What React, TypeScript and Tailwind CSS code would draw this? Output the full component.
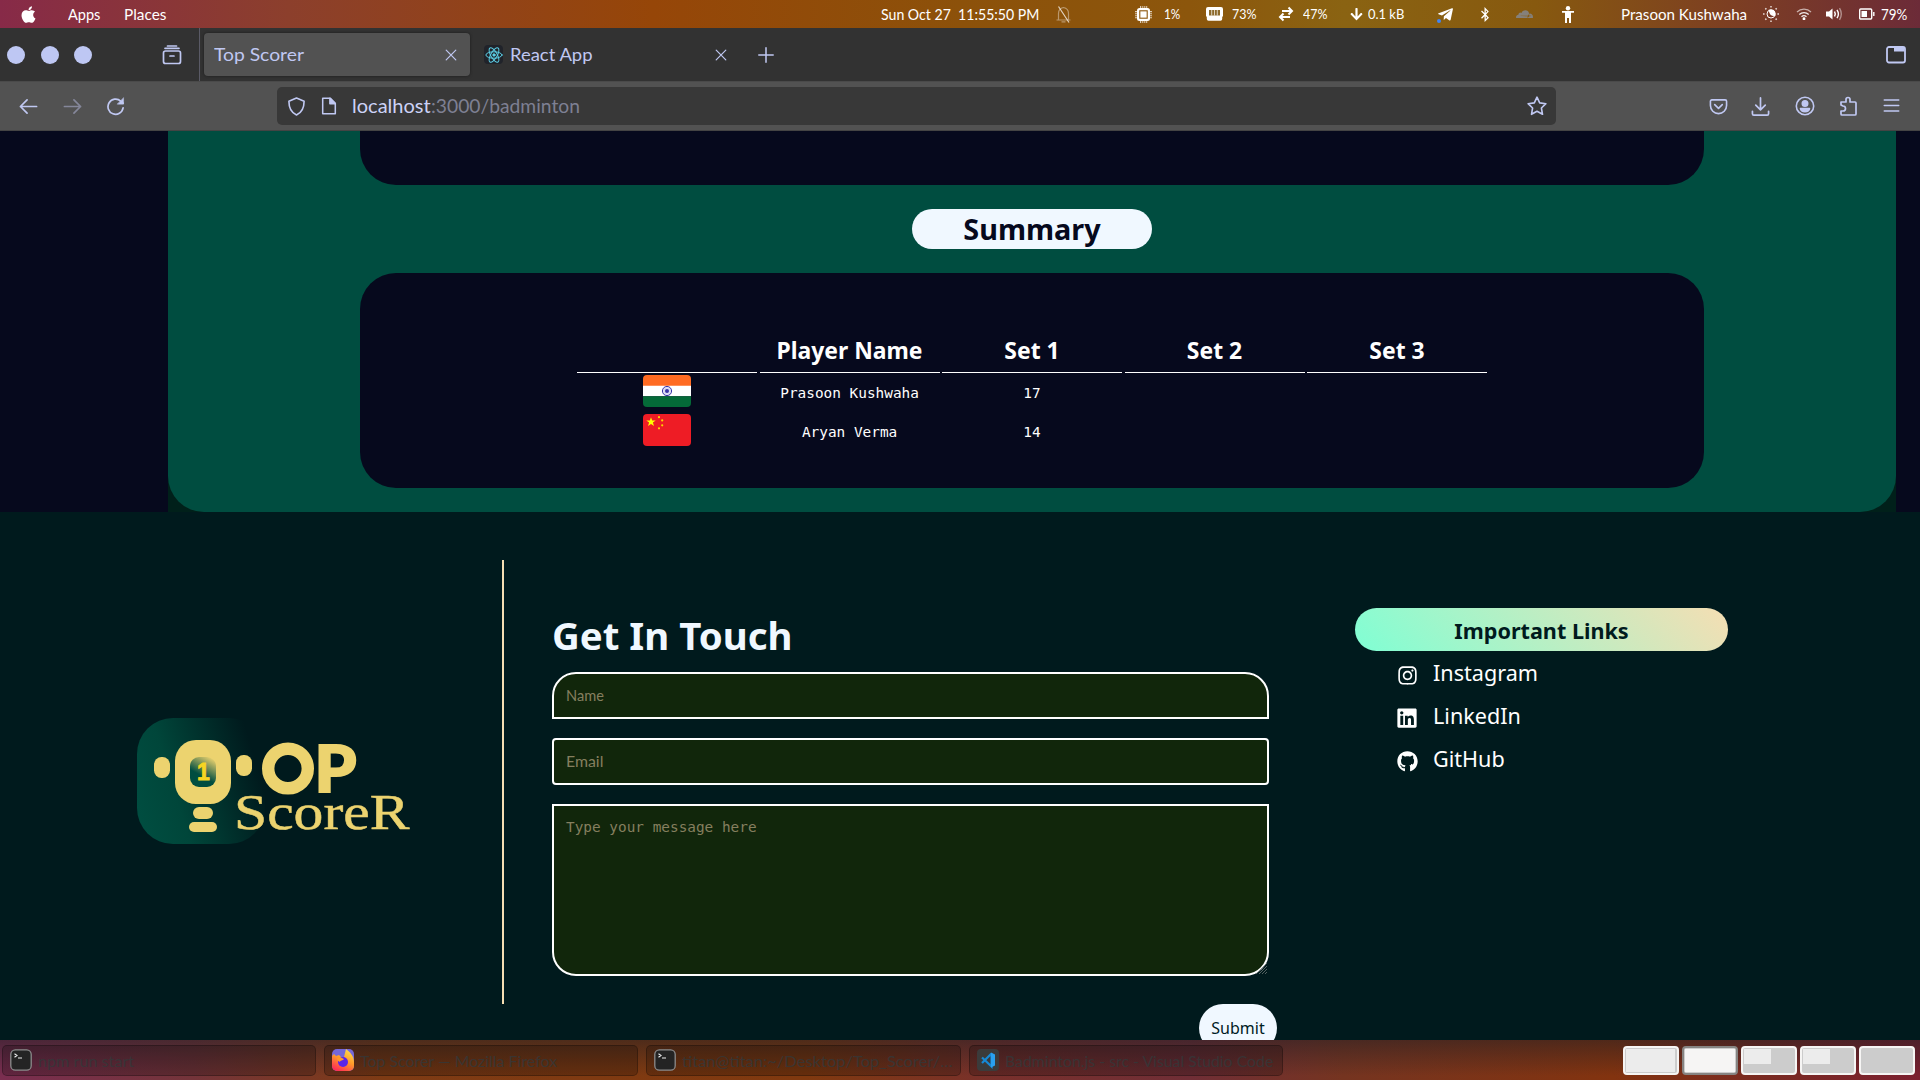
import { useLayoutEffect, useRef, useState } from "react";
import type { ReactNode } from "react";
import {
  FaApple,
  FaArrowDown,
  FaBluetoothB,
  FaCloudflare,
  FaGithub,
  FaInstagram,
  FaLinkedin,
  FaTelegramPlane,
} from "react-icons/fa";

/* Text squeezed or stretched horizontally to an exact width. */
function Hand({ w, className = "", children }: { w: number; className?: string; children: ReactNode }) {
  const ref = useRef<HTMLSpanElement>(null);
  const [scale, setScale] = useState(1);
  useLayoutEffect(() => {
    if (ref.current) setScale(w / ref.current.offsetWidth);
  }, [w]);
  return (
    <span className={`flex shrink-0 ${className}`} style={{ width: w }}>
      <span
        ref={ref}
        className="inline-block shrink-0 origin-left whitespace-nowrap font-['Lato',sans-serif]"
        style={{ transform: `scaleX(${scale})` }}
      >
        {children}
      </span>
    </span>
  );
}

function Line({ children, className = "", size = 20, sw = 1.6 }: { children: ReactNode; className?: string; size?: number; sw?: number }) {
  return (
    <svg
      width={size}
      height={size}
      viewBox="0 0 20 20"
      fill="none"
      stroke="currentColor"
      strokeWidth={sw}
      strokeLinecap="round"
      strokeLinejoin="round"
      className={`shrink-0 ${className}`}
    >
      {children}
    </svg>
  );
}

const Cross = ({ className = "" }: { className?: string }) => (
  <Line className={className} size={12} sw={2}>
    <path d="M2 2l16 16M18 2L2 18" />
  </Line>
);

function TopBar() {
  return (
    <header className="flex h-7 shrink-0 items-center bg-[linear-gradient(90deg,#872a48_0%,#8c3f2c_15%,#964608_34%,#8c510a_50%,#8c560c_62%,#8a6312_70%,#87590f_80%,#7d3f22_90%,#6c2b38_100%)] text-[15px] leading-none text-white">
      <FaApple className="ml-[19px] size-[19px] shrink-0" />
      <Hand w={32} className="ml-[30px]">Apps</Hand>
      <Hand w={42} className="ml-6">Places</Hand>
      <Hand w={158} className="ml-[715px]">Sun Oct 27&nbsp; 11:55:50 PM</Hand>
      <svg className="ml-[17px] h-[17px] w-[15px] shrink-0" viewBox="0 0 15 17" fill="none" stroke="currentColor" strokeWidth="1.200">
        <path d="M.5 14h14M2.500 14V7.500q0-5 5-6 5 1 5 6V14M5.500 15.800h4" opacity=".4" />
        <path d="M2.500.5l10.500 16" opacity=".75" />
      </svg>
      <svg className="ml-[64px] size-[17px] shrink-0" viewBox="0 0 17 17" fill="currentColor">
        <path d="M5 0h1.200v17H5zM7.300 0h1v17h-1zM9.300 0h1v17h-1zM11.200 0h1v17h-1zM0 5h17v1.200H0zM0 7.300h17v1H0zM0 9.300h17v1H0zM0 11.200h17v1H0z" opacity=".7" />
        <rect x="2" y="2" width="13" height="13" rx="2.5" />
        <rect x="4.800" y="4.800" width="7.400" height="7.400" fill="none" stroke="#8c560c" strokeWidth="1.100" />
      </svg>
      <Hand w={16} className="ml-3 text-sm leading-none">1%</Hand>
      <svg className="ml-[26px] h-[14px] w-[17px] shrink-0" viewBox="0 0 17 14" fill="currentColor">
        <path d="M2 0h13a2 2 0 0 1 2 2v7.500h-.8V12a1.700 1.700 0 0 1-1.700 1.700h-12A1.700 1.700 0 0 1 .8 12V9.500H0V2a2 2 0 0 1 2-2z" />
        <path d="M3 3h11v5.500H3z" fill="#8c6a2c" />
        <path d="M5.200 3h1v5.500h-1zM8 3h1v5.500H8zM10.800 3h1v5.500h-1z" opacity=".7" />
      </svg>
      <Hand w={24} className="ml-[9px] text-sm leading-none">73%</Hand>
      <svg className="ml-[22px] size-4 shrink-0" viewBox="0 0 16 16" fill="none" stroke="currentColor" strokeWidth="2">
        <path d="M4 5h10M10.500 1.500L14 5l-3.500 3.500M12 11H2M5.500 7.500L2 11l3.500 3.500" />
      </svg>
      <Hand w={24} className="ml-[9px] text-sm leading-none">47%</Hand>
      <FaArrowDown className="ml-[23px] h-[14px] w-[13px] shrink-0" />
      <Hand w={36} className="ml-[5px] text-sm leading-none">0.1 kB</Hand>
      <span className="relative ml-[33px] size-[17px] shrink-0">
        <FaTelegramPlane className="size-[17px]" />
        <span className="absolute bottom-0 left-0 size-1 rounded-full bg-[#4285f4]" />
      </span>
      <FaBluetoothB className="ml-[25px] h-[15px] w-3 shrink-0" />
      <FaCloudflare className="ml-[25px] size-[17px] shrink-0 text-[#85807a]" />
      <svg className="ml-[29px] h-[17px] w-3 shrink-0" viewBox="0 0 12 17" fill="currentColor">
        <circle cx="6" cy="2.200" r="2.200" />
        <path d="M0 5h12v1.800H9V17H7v-5H5v5H3V6.800H0z" />
      </svg>
      <Hand w={126} className="ml-[47px]">Prasoon Kushwaha</Hand>
      <svg className="ml-4 size-4 shrink-0" viewBox="0 0 16 16" stroke="currentColor" strokeWidth="1.500">
        <circle cx="8" cy="8" r="4" fill="none" strokeWidth="1" />
        <path d="M8 4a4 4 0 0 1 3.800 5.200C9 9.500 7 7.500 6.500 4.300z" fill="currentColor" />
        <path d="M8 0v1.600M8 14.400V16M0 8h1.600M14.400 8H16M2.300 2.300l1.100 1.100M12.600 12.600l1.100 1.100M2.300 13.700l1.100-1.100M12.600 3.400l1.100-1.100" opacity=".8" />
      </svg>
      <svg className="ml-[17px] h-3 w-4 shrink-0" viewBox="0 0 16 12" fill="none" stroke="currentColor" strokeWidth="1.300">
        <path d="M1 4a10 10 0 0 1 14 0" opacity=".6" />
        <path d="M3.300 6.500a6.700 6.700 0 0 1 9.400 0M5.500 8.800a3.600 3.600 0 0 1 5 0" opacity=".9" />
        <circle cx="8" cy="10.800" r=".8" fill="currentColor" />
      </svg>
      <svg className="ml-[14px] h-[14px] w-[17px] shrink-0" viewBox="0 0 17 14" fill="none" stroke="currentColor" strokeWidth="1.400">
        <path d="M0 4.500h3L6.500 1.500v11L3 9.500H0z" fill="currentColor" stroke="none" />
        <path d="M8.500 4.500q1.600 2.500 0 5M11 2.800q2.800 4.200 0 8.400" />
        <path d="M13.500 1.200q3.600 5.800 0 11.600" opacity=".45" />
      </svg>
      <svg className="ml-[16px] h-3 w-4 shrink-0" viewBox="0 0 16 12" fill="none" stroke="currentColor" strokeWidth="1.400">
        <rect x=".7" y="1" width="12" height="10" rx="1" />
        <path d="M2.500 3h5.500v6H2.500z" fill="currentColor" stroke="none" />
        <path d="M14.800 4v4" />
      </svg>
      <Hand w={26} className="ml-1.5">79%</Hand>
    </header>
  );
}

function TabBar() {
  return (
    <div className="flex h-[53px] shrink-0 items-center bg-[#323232] text-[#c0c8f2]">
      <span className="ml-[7px] size-[18px] rounded-full bg-[#bec7f3]" />
      <span className="ml-4 size-[18px] rounded-full bg-[#bec7f3]" />
      <span className="ml-[15px] size-[18px] rounded-full bg-[#bec7f3]" />
      <Line className="ml-[70px]" sw={1.7}>
        <rect x="1.500" y="6" width="17" height="12.500" rx="2" />
        <path d="M3 3.300h14M5.500 1h9M8 11h4" />
      </Line>
      <span className="ml-[17px] h-full w-px bg-[#5a5a66]" />
      <div className="ml-1 flex h-[43px] w-[266px] items-center rounded bg-[#525252] shadow-[0_0_3px_#1c1c1c]">
        <Hand w={90} className="ml-2.5 text-[18px]">Top Scorer</Hand>
        <Cross className="ml-[141px]" />
      </div>
      <span className="ml-3.5 flex size-[19px] items-center justify-center rounded-sm bg-[#20232a] text-[#5ccfe6]">
        <Line size={18} sw={1.1}>
          <ellipse cx="10" cy="10" rx="9" ry="3.600" />
          <ellipse cx="10" cy="10" rx="9" ry="3.600" transform="rotate(60 10 10)" />
          <ellipse cx="10" cy="10" rx="9" ry="3.600" transform="rotate(120 10 10)" />
          <circle cx="10" cy="10" r="1.300" fill="currentColor" />
        </Line>
      </span>
      <Hand w={83} className="ml-[7px] text-[18px]">React App</Hand>
      <Cross className="ml-[122px]" />
      <Line className="ml-[31px]" size={16} sw={1.9}>
        <path d="M10 1v18M1 10h18" />
      </Line>
      <Line className="mr-3.5 ml-auto" sw={1.8}>
        <rect x="1" y="2" width="18" height="15.500" rx="2" />
        <path d="M8 2h10.500v4.500H8z" fill="currentColor" stroke="none" />
      </Line>
    </div>
  );
}

function Toolbar() {
  return (
    <div className="flex h-[50px] shrink-0 items-center border-y border-t-[#4a4a4a] border-b-[#444] bg-[#525252] text-[#c0c8f2]">
      <Line className="ml-[19px]" size={19} sw={1.8}>
        <path d="M18.500 10H1.500M8.500 3l-7 7 7 7" />
      </Line>
      <Line className="ml-[25px] text-[#85879a]" size={19} sw={1.8}>
        <path d="M1.500 10h17M11.500 3l7 7-7 7" />
      </Line>
      <Line className="ml-6" size={19} sw={1.8}>
        <path d="M18 11.500A8 8 0 1 1 15.500 4.300L18 6.500" />
        <path d="M18.500 1v6.500h-6.500z" fill="currentColor" strokeWidth=".5" />
      </Line>
      <div className="ml-[152px] flex h-[38px] w-[1279px] items-center rounded-[5px] bg-[#383838]">
        <Line className="ml-[10px]" size={19} sw={1.7}>
          <path d="M10 1l8 3.500c0 7-2.500 12-8 14.500C4.500 16.500 2 11.500 2 4.500z" />
        </Line>
        <Line className="ml-[14px]" size={18} sw={1.7}>
          <path d="M3 1.500h8.500L17 7v11.500H3z" />
          <path d="M11 1.500V7.500h6z" fill="currentColor" />
        </Line>
        <Hand w={79} className="ml-[14px] text-[19px] text-[#ccd2f7]">localhost</Hand>
        <Hand w={149} className="text-[19px] text-[#7e8093]">:3000/badminton</Hand>
        <Line className="mr-[9px] ml-auto" sw={1.6}>
          <path d="M10 1.200l2.700 5.700 6.200.800-4.500 4.300 1.100 6.300L10 15.200l-5.500 3.100 1.100-6.300L1.100 7.700l6.200-.8z" />
        </Line>
      </div>
      <Line className="ml-[153px]" size={19} sw={1.7}>
        <path d="M3 3h14a1.500 1.500 0 0 1 1.500 1.500V9a8.500 8.500 0 0 1-17 0V4.500A1.500 1.500 0 0 1 3 3zM6 8l4 4 4-4" />
      </Line>
      <Line className="ml-[23px]" size={19} sw={1.8}>
        <path d="M10 1v12M5 8.500l5 5 5-5M1.500 15v2.500a1.500 1.500 0 0 0 1.500 1.500h14a1.500 1.500 0 0 0 1.500-1.500V15" />
      </Line>
      <Line className="ml-[25px]" size={20} sw={1.6}>
        <circle cx="10" cy="10" r="8.700" />
        <circle cx="10" cy="7.500" r="2.700" fill="currentColor" />
        <path d="M5.500 12.500h9q-.5 3-4.500 3.200-4-.2-4.500-3.200z" fill="currentColor" />
      </Line>
      <Line className="ml-[23px]" size={20} sw={1.7}>
        <path d="M3 9V6h5V3.500a2 2 0 0 1 4 0V6h5a1 1 0 0 1 1 1v11a1 1 0 0 1-1 1H4a1 1 0 0 1-1-1v-3h2a2.500 2.500 0 0 0 0-5z" />
      </Line>
      <Line className="ml-[25px] mb-0.5" size={17} sw={1.8}>
        <path d="M1.500 3.500h17M1.500 10h17M1.500 16.500h17" />
      </Line>
    </div>
  );
}

function IndiaFlag() {
  return (
    <svg width="48" height="32" viewBox="0 0 48 32" className="rounded-[4px]">
      <path fill="#ff6b22" d="M0 0h48v11H0z" />
      <path fill="#fff" d="M0 10.700h48v10.600H0z" />
      <path fill="#046a38" d="M0 21.300h48V32H0z" />
      <circle cx="24" cy="16" r="4.600" fill="#dcdcf4" stroke="#3a36a8" strokeWidth="1" />
      <circle cx="24" cy="16" r="2" fill="#3a36a8" />
    </svg>
  );
}

function ChinaFlag() {
  return (
    <svg width="48" height="32" viewBox="0 0 48 32" className="rounded-[4px]">
      <path fill="#ee1c25" d="M0 0h48v32H0z" />
      <path fill="#ff0" d="M8 3.200l1.200 3.300h3.500l-2.800 2.100 1.100 3.500L8 10l-3 2.100 1.100-3.500-2.800-2.100h3.500z" />
      <g fill="#ffd800">
        <circle cx="16" cy="3.200" r="1.100" />
        <circle cx="19.200" cy="6.400" r="1.100" />
        <circle cx="19.200" cy="11.300" r="1.100" />
        <circle cx="16" cy="14.300" r="1.100" />
      </g>
    </svg>
  );
}

function Summary() {
  const rows = [
    { flag: <IndiaFlag />, name: "Prasoon Kushwaha", score: "17" },
    { flag: <ChinaFlag />, name: "Aryan Verma", score: "14" },
  ];
  return (
    <section className="h-[381px] shrink-0 bg-[#06091d] pr-6 pl-[168px]">
      <div className="h-full bg-[#00201a]">
        <div className="flex h-full flex-col items-center rounded-b-[36px] bg-[#004d40]">
          <div className="h-[54px] w-[1344px] rounded-b-[36px] bg-[#06091d]" />
          <h2 className="mt-6 flex h-10 w-60 items-center justify-center rounded-full bg-[#f0f8ff] text-[28.8px] leading-none font-bold text-[#06091d]">
            Summary
          </h2>
          <div className="mt-6 h-[215px] w-[1344px] rounded-[36px] bg-[#06091d] pt-14 pl-[217px] text-white">
            <div className="grid w-[910px] grid-cols-5 gap-x-[2.500px] text-center text-[22.9px] font-bold">
              {["", "Player Name", "Set 1", "Set 2", "Set 3"].map((h, i) => (
                <div key={i} className="h-11 border-b border-white leading-[43px]">
                  {h}
                </div>
              ))}
            </div>
            {rows.map((r) => (
              <div
                key={r.name}
                className="mt-0.5 grid h-[37px] w-[910px] grid-cols-5 gap-x-0.5 text-center font-['DejaVu_Sans_Mono',monospace] text-[14.4px] leading-[37px]"
              >
                <div className="flex justify-center">{r.flag}</div>
                <div>{r.name}</div>
                <div>{r.score}</div>
              </div>
            ))}
          </div>
        </div>
      </div>
    </section>
  );
}

function Logo() {
  return (
    <svg width="276" height="130" viewBox="0 0 276 130" className="shrink-0">
      <defs>
        <linearGradient id="tile" x1="0" y1=".7" x2="1" y2=".4">
          <stop offset="0" stopColor="#004d40" />
          <stop offset=".3" stopColor="#00463a" />
          <stop offset=".95" stopColor="#001a1d" />
        </linearGradient>
        <linearGradient id="core" x1=".3" y1="1" x2=".8" y2="0">
          <stop offset=".35" stopColor="#004d40" />
          <stop offset="1" stopColor="#ecd36f" />
        </linearGradient>
      </defs>
      <rect x="0" y="1" width="128" height="126" rx="36" fill="url(#tile)" />
      <g fill="#ecd36f">
        <rect x="38" y="23" width="56" height="64" rx="21" />
        <rect x="17" y="40" width="16" height="21" rx="7.500" />
        <rect x="99" y="38" width="16" height="21" rx="7.500" />
        <rect x="56" y="90" width="20" height="12" rx="6" />
        <rect x="52" y="105" width="28" height="10" rx="5" />
      </g>
      <rect x="53" y="40" width="26" height="30" rx="9" fill="url(#core)" />
      <text x="66.500" y="63" textAnchor="middle" fontFamily="Liberation Sans" fontWeight="700" fontSize="23" fill="#f6d522" stroke="#f6d522" strokeWidth=".8">1</text>
      <circle cx="151" cy="51.500" r="19.800" fill="none" stroke="#ecd36f" strokeWidth="12.400" />
      <text x="177.500" y="74.500" fontFamily="Lato" fontWeight="900" fontSize="64" fill="#ecd36f" stroke="#ecd36f" strokeWidth="2" textLength="42" lengthAdjust="spacingAndGlyphs">P</text>
      <text x="97" y="112" fontFamily="Liberation Serif" fontSize="51" fill="#ecd36f" stroke="#ecd36f" strokeWidth=".5" textLength="175.500" lengthAdjust="spacingAndGlyphs">ScoreR</text>
    </svg>
  );
}

function Footer() {
  const links = [
    { icon: <FaInstagram className="size-[21px]" />, label: "Instagram" },
    { icon: <FaLinkedin className="size-[22px]" />, label: "LinkedIn" },
    { icon: <FaGithub className="size-[21px]" />, label: "GitHub" },
  ];
  return (
    <footer className="flex min-h-0 flex-1 items-start overflow-hidden bg-[#001a1d] pt-12">
      <div className="flex h-[444px] w-[504px] shrink-0 items-center border-r-2 border-[#f5deb3] pl-[137px]">
        <Logo />
      </div>
      <form className="ml-12 w-[717px] shrink-0 pt-[47px]">
        <h2 className="h-[65px] text-[38.4px] leading-[56px] font-bold text-[#f0f8ff]">Get In Touch</h2>
        <div className="flex h-[47px] items-center rounded-t-3xl border-2 border-white bg-[#11260b] px-3 text-[15px] text-[#857f5f]">
          <Hand w={38}>Name</Hand>
        </div>
        <div className="mt-[19px] flex h-[47px] items-center rounded border-2 border-white bg-[#11260b] px-3 text-[15px] text-[#857f5f]">
          <Hand w={37}>Email</Hand>
        </div>
        <div className="relative mt-[19px] h-[172px] rounded-b-3xl border-2 border-white bg-[#11260b] px-3 pt-[11px] font-['DejaVu_Sans_Mono',monospace] text-[14.4px] leading-5 text-[#857f5f]">
          Type your message here
          <svg className="absolute right-0 bottom-0" width="11" height="11" stroke="#6a7371" strokeWidth=".8">
            <path d="M0 11L11 0M3 11L11 3M6 11L11 6M9 11L11 9" />
          </svg>
        </div>
        <div className="mt-7 -mr-2 ml-auto flex h-12 w-[78px] items-center justify-center rounded-3xl bg-[#f0f8ff] text-base text-[#00201f]">
          Submit
        </div>
      </form>
      <nav className="ml-[86px] w-[373px] shrink-0 pt-12">
        <h3 className="flex h-[43px] items-center justify-center rounded-full bg-[linear-gradient(45deg,#7fffd4,#f5deb3)] pt-0.5 text-[21.6px] leading-none font-bold text-[#001a1d]">
          Important Links
        </h3>
        {links.map((l) => (
          <div key={l.label} className="flex h-[43px] items-center pl-[41px] text-[21.6px] leading-none text-white">
            <span className="mt-[5px] flex w-[22px] justify-center">{l.icon}</span>
            <span className="ml-[15px] pt-px">{l.label}</span>
          </div>
        ))}
      </nav>
    </footer>
  );
}

function Terminal() {
  return (
    <svg width="22" height="22" viewBox="0 0 22 22" className="shrink-0">
      <rect x=".8" y=".8" width="20.400" height="20.400" rx="4.500" fill="#242424" stroke="#8c8c8c" strokeWidth="1.300" />
      <path d="M4.500 4.800l2.500 1.700-2.500 1.700M8 9h4" fill="none" stroke="#eee" strokeWidth="1.100" />
    </svg>
  );
}

function Firefox() {
  return (
    <svg width="22" height="22" viewBox="0 0 22 22" className="shrink-0">
      <defs>
        <linearGradient id="fox" x1=".8" y1="0" x2=".3" y2="1">
          <stop offset="0" stopColor="#ffe14a" />
          <stop offset=".5" stopColor="#ff9a2a" />
          <stop offset="1" stopColor="#ff2f55" />
        </linearGradient>
        <clipPath id="foxTile">
          <rect width="22" height="22" rx="5" />
        </clipPath>
      </defs>
      <g clipPath="url(#foxTile)">
        <rect width="22" height="22" fill="#7568d8" />
        <path d="M0 7l2-2 2 2 3-1 2 2 3 0 2-8c4 3 8 7 8 13v9H0z" fill="url(#fox)" />
        <circle cx="11" cy="13" r="5" fill="#5a25e8" />
        <path d="M5 9c3-1 5 0 7 1-1 2-4 1-4 3-2-1-3-2-3-4z" fill="#ff9a2a" />
      </g>
    </svg>
  );
}

function Code() {
  return (
    <svg width="22" height="22" viewBox="0 0 22 22" className="shrink-0">
      <rect width="22" height="22" rx="4" fill="#3b3b3b" />
      <path d="M14.500 4.500v13L5 8.500M14.500 4.500L5 14" fill="none" stroke="#1689d6" strokeWidth="2.200" />
      <path d="M14 3.500l4 2v11l-4 2z" fill="#2aa0ee" />
    </svg>
  );
}

function Taskbar() {
  const tasks = [
    { icon: <Terminal />, label: "npm run start", w: 96 },
    { icon: <Firefox />, label: "Top Scorer — Mozilla Firefox", w: 197 },
    { icon: <Terminal />, label: "titan@titan:~/Desktop/Top_Scorer/…", w: 271 },
    { icon: <Code />, label: "Badminton.js - src - Visual Studio Code", w: 268 },
  ];
  return (
    <div className="flex h-10 shrink-0 items-center bg-[linear-gradient(180deg,rgba(30,30,36,0.5),rgba(30,30,36,0)_90%),linear-gradient(90deg,#7a2e50_0%,#74343a_10%,#7e3b14_20%,#80390f_42%,#78302c_52%,#702e36_62%,#753420_70%,#82330f_84%,#7a2a22_92%,#7c2030_100%)] pl-0.5">
      {tasks.map((t) => (
        <div
          key={t.label}
          className="mr-2 flex h-[31px] w-[314.2px] shrink-0 items-center rounded-[5px] border border-black/25 bg-black/20 pl-[7px] text-base leading-none text-[#33383a]/80"
        >
          {t.icon}
          <Hand w={t.w} className="mt-0.5 ml-[6px]">{t.label}</Hand>
        </div>
      ))}
      <div className="mr-[5px] ml-auto flex gap-[3px]">
        <div className="h-[29px] w-14 rounded border-2 border-[#f6f5f4] bg-[#ccc] p-px pr-0.5">
          <div className="h-full bg-[#ececec]" />
        </div>
        <div className="h-[29px] w-14 rounded border-2 border-[#868482] bg-[#ccc] p-px">
          <div className="h-full bg-[#f6f5f4]" />
        </div>
        <div className="h-[29px] w-14 rounded border-2 border-[#f6f5f4] bg-[#ccc] p-px">
          <div className="h-[15px] w-[27px] bg-[#ececec]" />
        </div>
        <div className="h-[29px] w-14 rounded border-2 border-[#f6f5f4] bg-[#ccc] p-px">
          <div className="h-[15px] w-[27px] bg-[#ececec]" />
        </div>
        <div className="h-[29px] w-14 rounded border-2 border-[#f6f5f4] bg-[#ccc]" />
      </div>
    </div>
  );
}

export default function App() {
  return (
    <div className="flex h-[1080px] w-[1920px] flex-col overflow-hidden font-['Noto_Sans',sans-serif]">
      <TopBar />
      <TabBar />
      <Toolbar />
      <Summary />
      <Footer />
      <Taskbar />
    </div>
  );
}
